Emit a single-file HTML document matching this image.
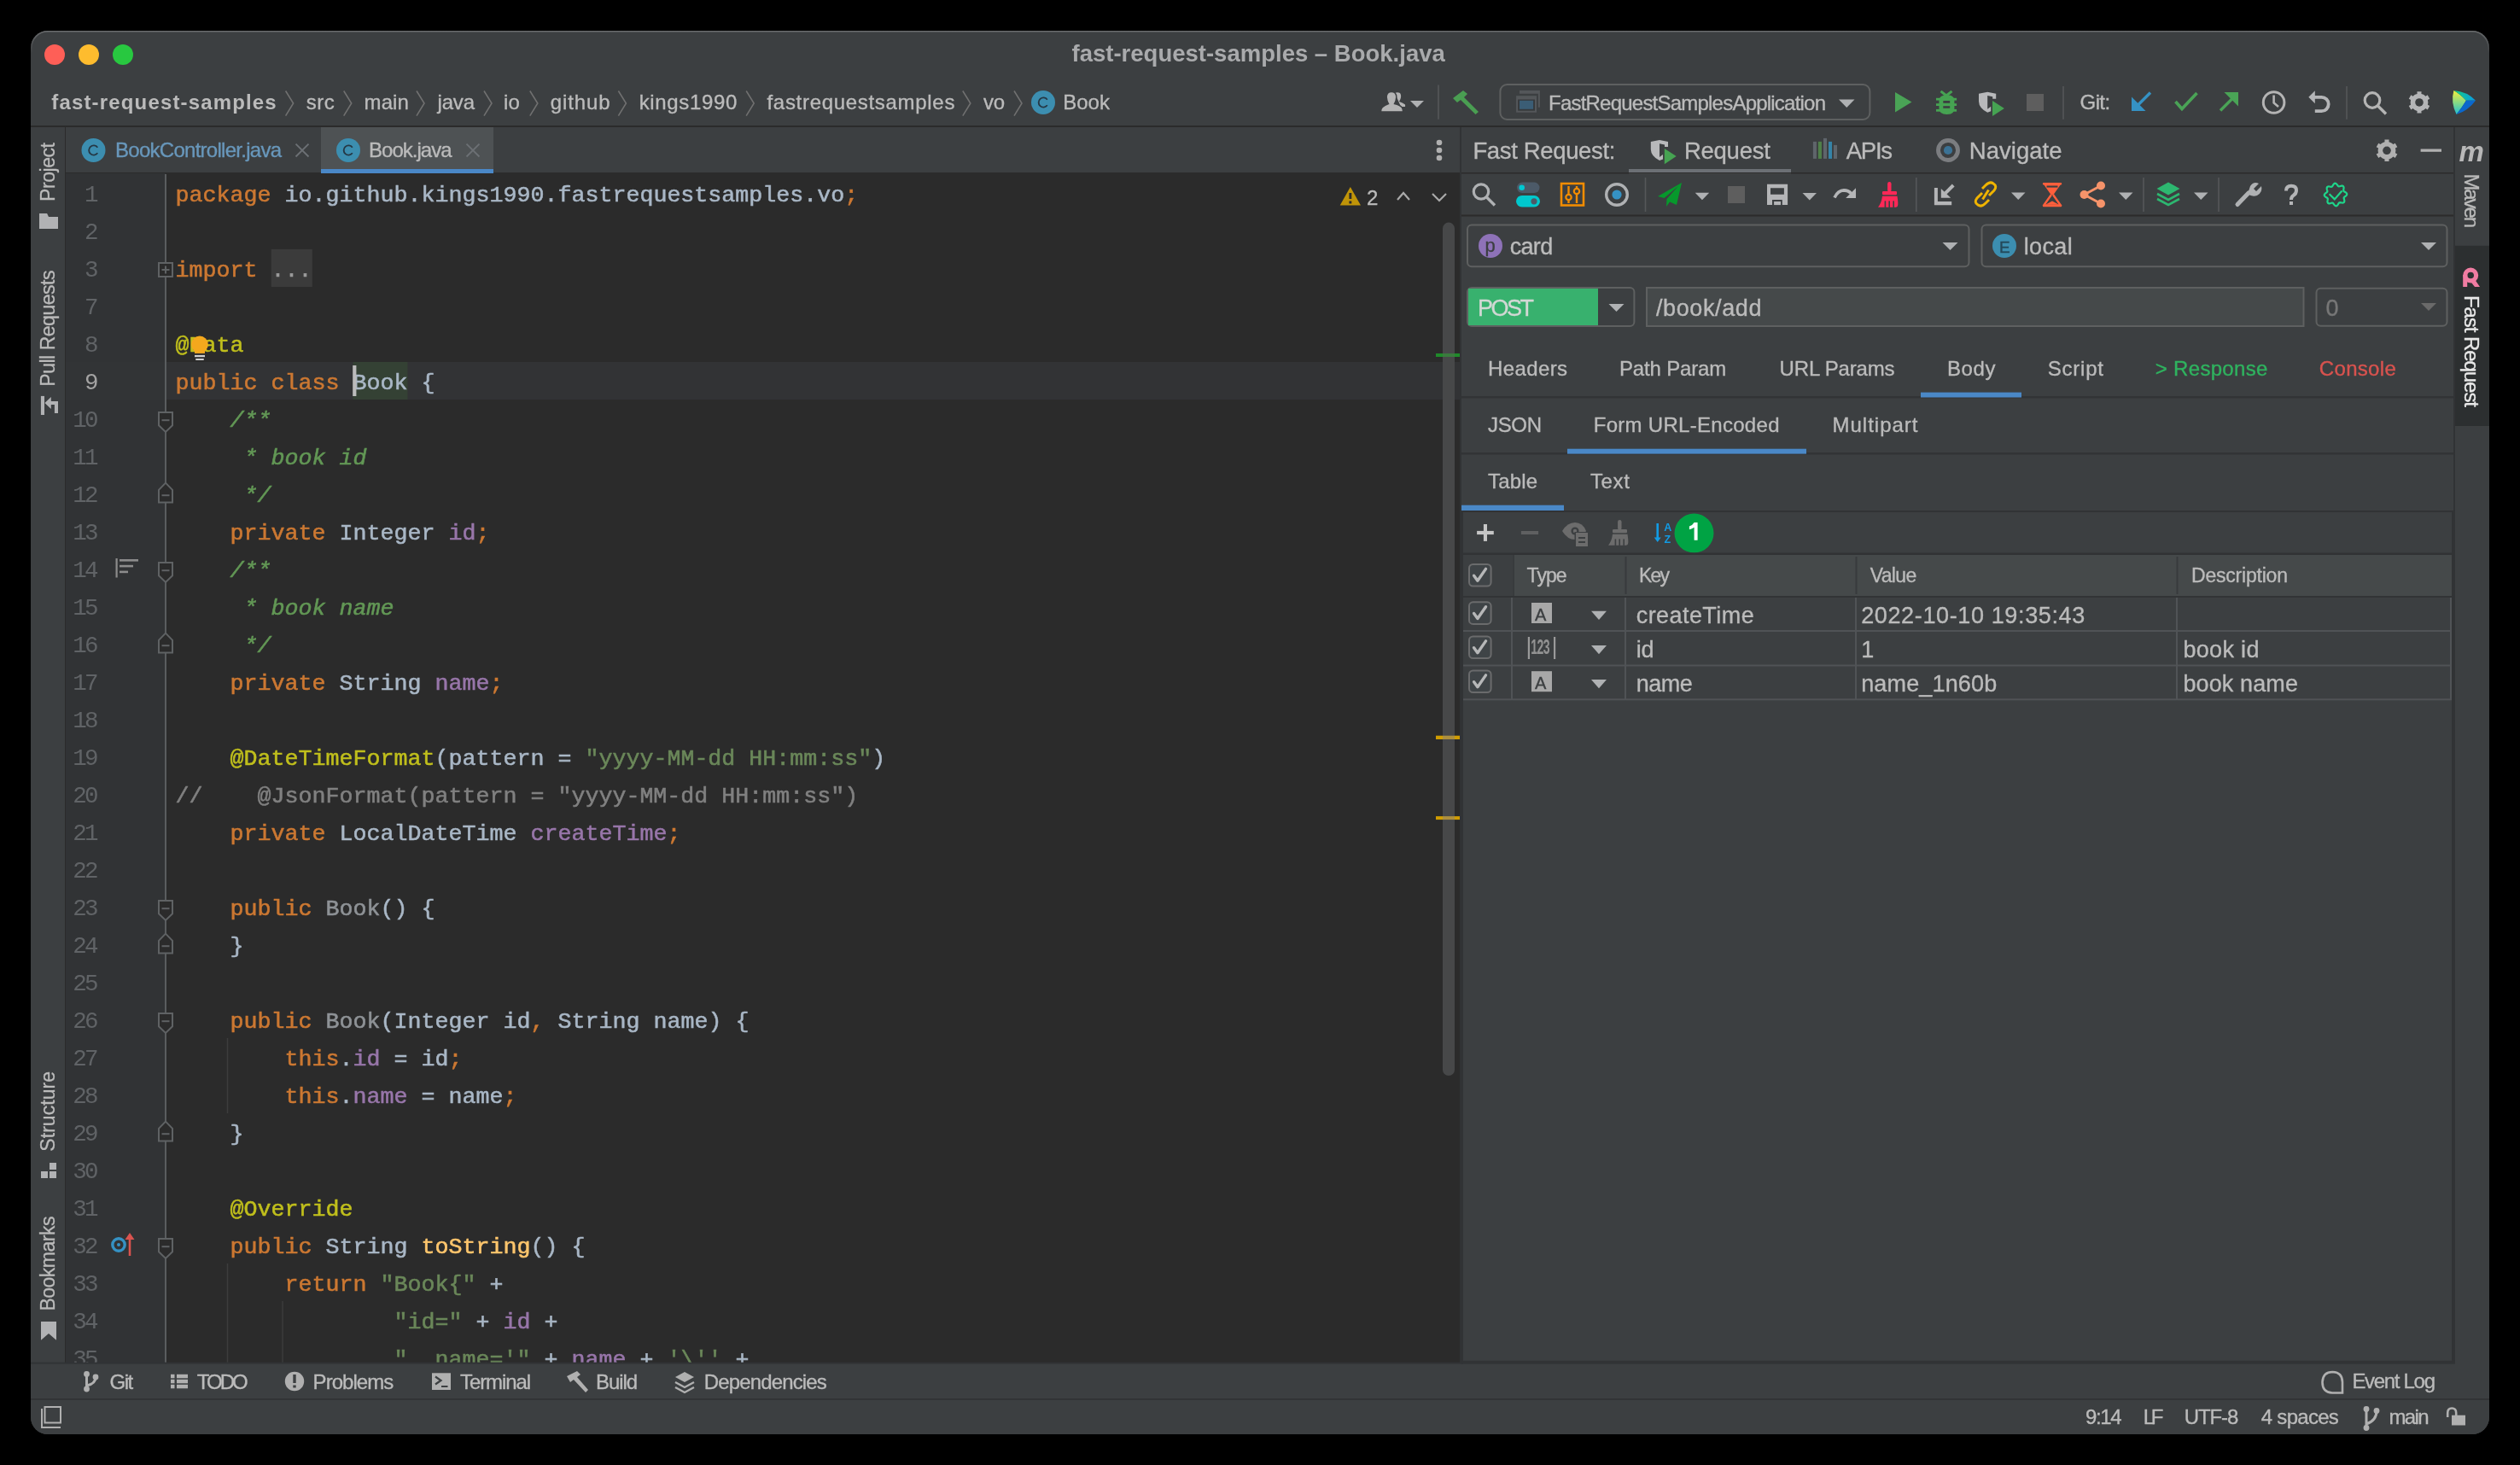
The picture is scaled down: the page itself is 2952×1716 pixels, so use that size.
<!DOCTYPE html><html><head><meta charset="utf-8"><title>fast-request-samples</title><style>html,body{margin:0;padding:0;background:#000;width:2952px;height:1716px;overflow:hidden}svg{display:block}text{font-kerning:normal}#wrap{will-change:transform;width:2952px;height:1716px}</style></head><body><div id="wrap"><svg width="2952" height="1716" viewBox="0 0 2952 1716">
<defs><clipPath id="win"><rect x="36" y="36" width="2880" height="1644" rx="20" ry="20"/></clipPath><clipPath id="ed"><rect x="77" y="203" width="1633" height="1393"/></clipPath></defs>
<rect x="0" y="0" width="2952" height="1716" fill="#000000" />
<g clip-path="url(#win)">
<rect x="36" y="36" width="2880" height="1644" fill="#3c3f41" />
<circle cx="64" cy="64" r="12" fill="#fe5f57"/>
<circle cx="104" cy="64" r="12" fill="#febc2e"/>
<circle cx="144" cy="64" r="12" fill="#28c840"/>
<text x="1255.50" y="72" font-family='"Liberation Sans", sans-serif' font-size="27.5" font-weight="bold" font-style="normal" fill="#a9aaac" letter-spacing="0.005" >fast-request-samples – Book.java</text>
<text x="60.30" y="128" font-family='"Liberation Sans", sans-serif' font-size="24" font-weight="bold" font-style="normal" fill="#bbbbbb" letter-spacing="1.158" >fast-request-samples</text>
<text x="358.70" y="128" font-family='"Liberation Sans", sans-serif' font-size="24" font-weight="normal" font-style="normal" fill="#bbbbbb" stroke="#bbbbbb" stroke-width="0.35" letter-spacing="0.500" >src</text>
<text x="426.50" y="128" font-family='"Liberation Sans", sans-serif' font-size="24" font-weight="normal" font-style="normal" fill="#bbbbbb" stroke="#bbbbbb" stroke-width="0.35" letter-spacing="0.133" >main</text>
<text x="512.50" y="128" font-family='"Liberation Sans", sans-serif' font-size="24" font-weight="normal" font-style="normal" fill="#bbbbbb" stroke="#bbbbbb" stroke-width="0.35" letter-spacing="-0.183" >java</text>
<text x="589.90" y="128" font-family='"Liberation Sans", sans-serif' font-size="24" font-weight="normal" font-style="normal" fill="#bbbbbb" stroke="#bbbbbb" stroke-width="0.35" letter-spacing="0.400" >io</text>
<text x="644.80" y="128" font-family='"Liberation Sans", sans-serif' font-size="24" font-weight="normal" font-style="normal" fill="#bbbbbb" stroke="#bbbbbb" stroke-width="0.35" letter-spacing="0.860" >github</text>
<text x="748.70" y="128" font-family='"Liberation Sans", sans-serif' font-size="24" font-weight="normal" font-style="normal" fill="#bbbbbb" stroke="#bbbbbb" stroke-width="0.35" letter-spacing="0.662" >kings1990</text>
<text x="898.50" y="128" font-family='"Liberation Sans", sans-serif' font-size="24" font-weight="normal" font-style="normal" fill="#bbbbbb" stroke="#bbbbbb" stroke-width="0.35" letter-spacing="0.694" >fastrequestsamples</text>
<text x="1152.00" y="128" font-family='"Liberation Sans", sans-serif' font-size="24" font-weight="normal" font-style="normal" fill="#bbbbbb" stroke="#bbbbbb" stroke-width="0.35" letter-spacing="-0.150" >vo</text>
<polyline points="334.6,106.5 343.6,121 334.6,135.7" fill="none" stroke="#707070" stroke-width="1.6"/>
<polyline points="402.7,106.5 411.7,121 402.7,135.7" fill="none" stroke="#707070" stroke-width="1.6"/>
<polyline points="488,106.5 497,121 488,135.7" fill="none" stroke="#707070" stroke-width="1.6"/>
<polyline points="567,106.5 576,121 567,135.7" fill="none" stroke="#707070" stroke-width="1.6"/>
<polyline points="620.8,106.5 629.8,121 620.8,135.7" fill="none" stroke="#707070" stroke-width="1.6"/>
<polyline points="724.4,106.5 733.4,121 724.4,135.7" fill="none" stroke="#707070" stroke-width="1.6"/>
<polyline points="874.2,106.5 883.2,121 874.2,135.7" fill="none" stroke="#707070" stroke-width="1.6"/>
<polyline points="1127.8,106.5 1136.8,121 1127.8,135.7" fill="none" stroke="#707070" stroke-width="1.6"/>
<polyline points="1188,106.5 1197,121 1188,135.7" fill="none" stroke="#707070" stroke-width="1.6"/>
<circle cx="1222" cy="120" r="14" fill="#3c8eb0"/>
<path d="M1226.8,116.7 A5.6,5.6 0 1 0 1226.8,123.3" fill="none" stroke="#253845" stroke-width="1.9"/>
<text x="1245.20" y="128" font-family='"Liberation Sans", sans-serif' font-size="24" font-weight="normal" font-style="normal" fill="#bbbbbb" stroke="#bbbbbb" stroke-width="0.35" letter-spacing="0.017" >Book</text>
<rect x="36" y="147" width="2880" height="2" fill="#2b2b2b" />
<rect x="36" y="149" width="40" height="1447" fill="#3c3f41" />
<rect x="76" y="149" width="1" height="1447" fill="#2b2b2b" />
<text x="0" y="0" transform="translate(63.91,236.00) rotate(-90)" font-family='"Liberation Sans", sans-serif' font-size="23" fill="#bbbbbb" stroke="#bbbbbb" stroke-width="0.3" letter-spacing="-0.433">Project</text>
<text x="0" y="0" transform="translate(63.91,452.70) rotate(-90)" font-family='"Liberation Sans", sans-serif' font-size="23" fill="#bbbbbb" stroke="#bbbbbb" stroke-width="0.3" letter-spacing="-0.475">Pull Requests</text>
<text x="0" y="0" transform="translate(63.91,1348.70) rotate(-90)" font-family='"Liberation Sans", sans-serif' font-size="23" fill="#bbbbbb" stroke="#bbbbbb" stroke-width="0.3" letter-spacing="0.050">Structure</text>
<text x="0" y="0" transform="translate(63.91,1535.60) rotate(-90)" font-family='"Liberation Sans", sans-serif' font-size="23" fill="#bbbbbb" stroke="#bbbbbb" stroke-width="0.3" letter-spacing="-0.494">Bookmarks</text>
<path d="M46,250 L55.1,250 L57,254 L68,254 L68,268 L46,268 Z" fill="#b1b2b4"/>
<rect x="47.9" y="463.9" width="4.1" height="22.1" fill="#b1b2b4"/>
<path d="M52.4,472 L59.8,465 L59.8,470 L68,470 L68,484 L63.9,484 L63.9,474.1 L59.8,474.1 L59.8,479 Z" fill="#b1b2b4"/>
<rect x="58" y="1362" width="8" height="8" fill="#b1b2b4"/><rect x="48" y="1372" width="8" height="8" fill="#b1b2b4"/><rect x="58" y="1372" width="8" height="8" fill="#b1b2b4"/>
<path d="M48,1548 L66,1548 L66,1569.8 L57,1562 L48,1569.8 Z" fill="#b1b2b4"/>
<rect x="77" y="149" width="1633" height="53" fill="#3c3f41" />
<rect x="376" y="149" width="202" height="53" fill="#4e5254" />
<circle cx="109.5" cy="176" r="14" fill="#3c8eb0"/>
<path d="M114.3,172.7 A5.6,5.6 0 1 0 114.3,179.3" fill="none" stroke="#253845" stroke-width="1.9"/>
<text x="135.00" y="184" font-family='"Liberation Sans", sans-serif' font-size="24" font-weight="normal" font-style="normal" fill="#6897bb" stroke="#6897bb" stroke-width="0.35" letter-spacing="-0.728" >BookController.java</text>
<circle cx="408" cy="176" r="14" fill="#3c8eb0"/>
<path d="M412.8,172.7 A5.6,5.6 0 1 0 412.8,179.3" fill="none" stroke="#253845" stroke-width="1.9"/>
<text x="432.00" y="184" font-family='"Liberation Sans", sans-serif' font-size="24" font-weight="normal" font-style="normal" fill="#bbbbbb" stroke="#bbbbbb" stroke-width="0.35" letter-spacing="-0.988" >Book.java</text>
<path d="M346.5,168.6 L361.5,183.5 M361.5,168.6 L346.5,183.5" stroke="#6c7074" stroke-width="1.9"/>
<path d="M546.5,168.6 L561.5,183.5 M561.5,168.6 L546.5,183.5" stroke="#6c7074" stroke-width="1.9"/>
<circle cx="1686" cy="167" r="3.3" fill="#b0b0b0"/>
<circle cx="1686" cy="176" r="3.3" fill="#b0b0b0"/>
<circle cx="1686" cy="185" r="3.3" fill="#b0b0b0"/>
<rect x="77" y="202" width="1633" height="1" fill="#2b2b2b" />
<rect x="376" y="198" width="202" height="5.699999999999989" fill="#4a88c7" />
<rect x="77" y="203" width="1633" height="1393" fill="#2b2b2b" />
<rect x="77" y="203" width="117" height="1393" fill="#313335" />
<g clip-path="url(#ed)">
<rect x="194" y="424" width="1516" height="44" fill="#323335" />
<rect x="77" y="424" width="117" height="44" fill="#323436" />
<rect x="413.5" y="424" width="64.0" height="44" fill="#344134" />
<rect x="317.7" y="291.8" width="48.10000000000002" height="44.19999999999999" fill="#3b3b3b" />
<line x1="266.5" y1="1216" x2="266.5" y2="1304" stroke="#3d3d3d" stroke-width="1.5" />
<line x1="266.5" y1="1480" x2="266.5" y2="1596" stroke="#3d3d3d" stroke-width="1.5" />
<line x1="331" y1="1524" x2="331" y2="1596" stroke="#3d3d3d" stroke-width="1.5" />
<line x1="194" y1="204" x2="194" y2="1596" stroke="#5a5d5f" stroke-width="2" />
<path d="M186,483 L202,483 L202,498.2 L194,505.9 L186,498.2 Z" fill="#2b2b2b" stroke="#5f6264" stroke-width="2"/>
<rect x="189.5" y="491.2" width="9" height="2" fill="#5f6264"/>
<path d="M186,659 L202,659 L202,674.2 L194,681.9 L186,674.2 Z" fill="#2b2b2b" stroke="#5f6264" stroke-width="2"/>
<rect x="189.5" y="667.2" width="9" height="2" fill="#5f6264"/>
<path d="M186,1055 L202,1055 L202,1070.2 L194,1077.9 L186,1070.2 Z" fill="#2b2b2b" stroke="#5f6264" stroke-width="2"/>
<rect x="189.5" y="1063.2" width="9" height="2" fill="#5f6264"/>
<path d="M186,1187 L202,1187 L202,1202.2 L194,1209.9 L186,1202.2 Z" fill="#2b2b2b" stroke="#5f6264" stroke-width="2"/>
<rect x="189.5" y="1195.2" width="9" height="2" fill="#5f6264"/>
<path d="M186,1451 L202,1451 L202,1466.2 L194,1473.9 L186,1466.2 Z" fill="#2b2b2b" stroke="#5f6264" stroke-width="2"/>
<rect x="189.5" y="1459.2" width="9" height="2" fill="#5f6264"/>
<path d="M186,588.6 L202,588.6 L202,573.8 L194,565.6 L186,573.8 Z" fill="#2b2b2b" stroke="#5f6264" stroke-width="2"/>
<rect x="189.5" y="579.2" width="9" height="2" fill="#5f6264"/>
<path d="M186,764.6 L202,764.6 L202,749.8 L194,741.6 L186,749.8 Z" fill="#2b2b2b" stroke="#5f6264" stroke-width="2"/>
<rect x="189.5" y="755.2" width="9" height="2" fill="#5f6264"/>
<path d="M186,1116.6 L202,1116.6 L202,1101.8 L194,1093.6 L186,1101.8 Z" fill="#2b2b2b" stroke="#5f6264" stroke-width="2"/>
<rect x="189.5" y="1107.2" width="9" height="2" fill="#5f6264"/>
<path d="M186,1336.6 L202,1336.6 L202,1321.8 L194,1313.6 L186,1321.8 Z" fill="#2b2b2b" stroke="#5f6264" stroke-width="2"/>
<rect x="189.5" y="1327.2" width="9" height="2" fill="#5f6264"/>
<rect x="186" y="308" width="16" height="16" fill="#2b2b2b" stroke="#5f6264" stroke-width="2"/>
<rect x="189.5" y="315" width="9" height="2" fill="#5f6264"/><rect x="193" y="311.5" width="2" height="9" fill="#5f6264"/>
<rect x="135.5" y="654" width="2.2" height="22.5" fill="#8c8c8c"/>
<rect x="140" y="655.0" width="22" height="2.6" fill="#8c8c8c"/>
<rect x="140" y="661.8" width="16" height="2.6" fill="#8c8c8c"/>
<rect x="140" y="668.6" width="10" height="2.6" fill="#8c8c8c"/>
<circle cx="139" cy="1458" r="7.2" fill="none" stroke="#3592c4" stroke-width="3.4"/>
<circle cx="139" cy="1458" r="2" fill="#3592c4"/>
<path d="M152,1471 L152,1450" stroke="#d9534f" stroke-width="2.6"/>
<path d="M146.5,1452 L152,1444 L157.5,1452 Z" fill="#d9534f"/>
<text x="113" y="235.5" text-anchor="end" font-family='"Liberation Mono", monospace' font-size="27.5" letter-spacing="-2.6" fill="#606366">1</text>
<text x="205.5" y="235.5" font-family='"Liberation Mono", monospace' font-size="26.662" stroke-width="0.55" xml:space="preserve" style="white-space:pre"><tspan fill="#cc7832" stroke="#cc7832">package</tspan><tspan fill="#a9b7c6" stroke="#a9b7c6"> io.github.kings1990.fastrequestsamples.vo</tspan><tspan fill="#cc7832" stroke="#cc7832">;</tspan></text>
<text x="113" y="279.5" text-anchor="end" font-family='"Liberation Mono", monospace' font-size="27.5" letter-spacing="-2.6" fill="#606366">2</text>
<text x="113" y="323.5" text-anchor="end" font-family='"Liberation Mono", monospace' font-size="27.5" letter-spacing="-2.6" fill="#606366">3</text>
<text x="205.5" y="323.5" font-family='"Liberation Mono", monospace' font-size="26.662" stroke-width="0.55" xml:space="preserve" style="white-space:pre"><tspan fill="#cc7832" stroke="#cc7832">import</tspan><tspan fill="#a9b7c6" stroke="#a9b7c6"> </tspan><tspan fill="#9a9a9a" stroke="#9a9a9a">...</tspan></text>
<text x="113" y="367.5" text-anchor="end" font-family='"Liberation Mono", monospace' font-size="27.5" letter-spacing="-2.6" fill="#606366">7</text>
<text x="113" y="411.5" text-anchor="end" font-family='"Liberation Mono", monospace' font-size="27.5" letter-spacing="-2.6" fill="#606366">8</text>
<text x="205.5" y="411.5" font-family='"Liberation Mono", monospace' font-size="26.662" stroke-width="0.55" xml:space="preserve" style="white-space:pre"><tspan fill="#c0bf1c" stroke="#c0bf1c">@Data</tspan></text>
<text x="113" y="455.5" text-anchor="end" font-family='"Liberation Mono", monospace' font-size="27.5" letter-spacing="-2.6" fill="#a4a3a3">9</text>
<text x="205.5" y="455.5" font-family='"Liberation Mono", monospace' font-size="26.662" stroke-width="0.55" xml:space="preserve" style="white-space:pre"><tspan fill="#cc7832" stroke="#cc7832">public class </tspan><tspan fill="#a9b7c6" stroke="#a9b7c6">Book {</tspan></text>
<text x="113" y="499.5" text-anchor="end" font-family='"Liberation Mono", monospace' font-size="27.5" letter-spacing="-2.6" fill="#606366">10</text>
<text x="205.5" y="499.5" font-family='"Liberation Mono", monospace' font-size="26.662" stroke-width="0.55" xml:space="preserve" style="white-space:pre"><tspan fill="#629755" stroke="#629755" font-style="italic">    /**</tspan></text>
<text x="113" y="543.5" text-anchor="end" font-family='"Liberation Mono", monospace' font-size="27.5" letter-spacing="-2.6" fill="#606366">11</text>
<text x="205.5" y="543.5" font-family='"Liberation Mono", monospace' font-size="26.662" stroke-width="0.55" xml:space="preserve" style="white-space:pre"><tspan fill="#629755" stroke="#629755" font-style="italic">     * book id</tspan></text>
<text x="113" y="587.5" text-anchor="end" font-family='"Liberation Mono", monospace' font-size="27.5" letter-spacing="-2.6" fill="#606366">12</text>
<text x="205.5" y="587.5" font-family='"Liberation Mono", monospace' font-size="26.662" stroke-width="0.55" xml:space="preserve" style="white-space:pre"><tspan fill="#629755" stroke="#629755" font-style="italic">     */</tspan></text>
<text x="113" y="631.5" text-anchor="end" font-family='"Liberation Mono", monospace' font-size="27.5" letter-spacing="-2.6" fill="#606366">13</text>
<text x="205.5" y="631.5" font-family='"Liberation Mono", monospace' font-size="26.662" stroke-width="0.55" xml:space="preserve" style="white-space:pre"><tspan fill="#cc7832" stroke="#cc7832">    private </tspan><tspan fill="#a9b7c6" stroke="#a9b7c6">Integer </tspan><tspan fill="#9876aa" stroke="#9876aa">id</tspan><tspan fill="#cc7832" stroke="#cc7832">;</tspan></text>
<text x="113" y="675.5" text-anchor="end" font-family='"Liberation Mono", monospace' font-size="27.5" letter-spacing="-2.6" fill="#606366">14</text>
<text x="205.5" y="675.5" font-family='"Liberation Mono", monospace' font-size="26.662" stroke-width="0.55" xml:space="preserve" style="white-space:pre"><tspan fill="#629755" stroke="#629755" font-style="italic">    /**</tspan></text>
<text x="113" y="719.5" text-anchor="end" font-family='"Liberation Mono", monospace' font-size="27.5" letter-spacing="-2.6" fill="#606366">15</text>
<text x="205.5" y="719.5" font-family='"Liberation Mono", monospace' font-size="26.662" stroke-width="0.55" xml:space="preserve" style="white-space:pre"><tspan fill="#629755" stroke="#629755" font-style="italic">     * book name</tspan></text>
<text x="113" y="763.5" text-anchor="end" font-family='"Liberation Mono", monospace' font-size="27.5" letter-spacing="-2.6" fill="#606366">16</text>
<text x="205.5" y="763.5" font-family='"Liberation Mono", monospace' font-size="26.662" stroke-width="0.55" xml:space="preserve" style="white-space:pre"><tspan fill="#629755" stroke="#629755" font-style="italic">     */</tspan></text>
<text x="113" y="807.5" text-anchor="end" font-family='"Liberation Mono", monospace' font-size="27.5" letter-spacing="-2.6" fill="#606366">17</text>
<text x="205.5" y="807.5" font-family='"Liberation Mono", monospace' font-size="26.662" stroke-width="0.55" xml:space="preserve" style="white-space:pre"><tspan fill="#cc7832" stroke="#cc7832">    private </tspan><tspan fill="#a9b7c6" stroke="#a9b7c6">String </tspan><tspan fill="#9876aa" stroke="#9876aa">name</tspan><tspan fill="#cc7832" stroke="#cc7832">;</tspan></text>
<text x="113" y="851.5" text-anchor="end" font-family='"Liberation Mono", monospace' font-size="27.5" letter-spacing="-2.6" fill="#606366">18</text>
<text x="113" y="895.5" text-anchor="end" font-family='"Liberation Mono", monospace' font-size="27.5" letter-spacing="-2.6" fill="#606366">19</text>
<text x="205.5" y="895.5" font-family='"Liberation Mono", monospace' font-size="26.662" stroke-width="0.55" xml:space="preserve" style="white-space:pre"><tspan fill="#c0bf1c" stroke="#c0bf1c">    @DateTimeFormat</tspan><tspan fill="#a9b7c6" stroke="#a9b7c6">(pattern = </tspan><tspan fill="#6a8759" stroke="#6a8759">&quot;yyyy-MM-dd HH:mm:ss&quot;</tspan><tspan fill="#a9b7c6" stroke="#a9b7c6">)</tspan></text>
<text x="113" y="939.5" text-anchor="end" font-family='"Liberation Mono", monospace' font-size="27.5" letter-spacing="-2.6" fill="#606366">20</text>
<text x="205.5" y="939.5" font-family='"Liberation Mono", monospace' font-size="26.662" stroke-width="0.55" xml:space="preserve" style="white-space:pre"><tspan fill="#808080" stroke="#808080">//    @JsonFormat(pattern = &quot;yyyy-MM-dd HH:mm:ss&quot;)</tspan></text>
<text x="113" y="983.5" text-anchor="end" font-family='"Liberation Mono", monospace' font-size="27.5" letter-spacing="-2.6" fill="#606366">21</text>
<text x="205.5" y="983.5" font-family='"Liberation Mono", monospace' font-size="26.662" stroke-width="0.55" xml:space="preserve" style="white-space:pre"><tspan fill="#cc7832" stroke="#cc7832">    private </tspan><tspan fill="#a9b7c6" stroke="#a9b7c6">LocalDateTime </tspan><tspan fill="#9876aa" stroke="#9876aa">createTime</tspan><tspan fill="#cc7832" stroke="#cc7832">;</tspan></text>
<text x="113" y="1027.5" text-anchor="end" font-family='"Liberation Mono", monospace' font-size="27.5" letter-spacing="-2.6" fill="#606366">22</text>
<text x="113" y="1071.5" text-anchor="end" font-family='"Liberation Mono", monospace' font-size="27.5" letter-spacing="-2.6" fill="#606366">23</text>
<text x="205.5" y="1071.5" font-family='"Liberation Mono", monospace' font-size="26.662" stroke-width="0.55" xml:space="preserve" style="white-space:pre"><tspan fill="#cc7832" stroke="#cc7832">    public </tspan><tspan fill="#8e9296" stroke="#8e9296">Book</tspan><tspan fill="#a9b7c6" stroke="#a9b7c6">() {</tspan></text>
<text x="113" y="1115.5" text-anchor="end" font-family='"Liberation Mono", monospace' font-size="27.5" letter-spacing="-2.6" fill="#606366">24</text>
<text x="205.5" y="1115.5" font-family='"Liberation Mono", monospace' font-size="26.662" stroke-width="0.55" xml:space="preserve" style="white-space:pre"><tspan fill="#a9b7c6" stroke="#a9b7c6">    }</tspan></text>
<text x="113" y="1159.5" text-anchor="end" font-family='"Liberation Mono", monospace' font-size="27.5" letter-spacing="-2.6" fill="#606366">25</text>
<text x="113" y="1203.5" text-anchor="end" font-family='"Liberation Mono", monospace' font-size="27.5" letter-spacing="-2.6" fill="#606366">26</text>
<text x="205.5" y="1203.5" font-family='"Liberation Mono", monospace' font-size="26.662" stroke-width="0.55" xml:space="preserve" style="white-space:pre"><tspan fill="#cc7832" stroke="#cc7832">    public </tspan><tspan fill="#8e9296" stroke="#8e9296">Book</tspan><tspan fill="#a9b7c6" stroke="#a9b7c6">(Integer id</tspan><tspan fill="#cc7832" stroke="#cc7832">,</tspan><tspan fill="#a9b7c6" stroke="#a9b7c6"> String name) {</tspan></text>
<text x="113" y="1247.5" text-anchor="end" font-family='"Liberation Mono", monospace' font-size="27.5" letter-spacing="-2.6" fill="#606366">27</text>
<text x="205.5" y="1247.5" font-family='"Liberation Mono", monospace' font-size="26.662" stroke-width="0.55" xml:space="preserve" style="white-space:pre"><tspan fill="#cc7832" stroke="#cc7832">        this</tspan><tspan fill="#a9b7c6" stroke="#a9b7c6">.</tspan><tspan fill="#9876aa" stroke="#9876aa">id</tspan><tspan fill="#a9b7c6" stroke="#a9b7c6"> = id</tspan><tspan fill="#cc7832" stroke="#cc7832">;</tspan></text>
<text x="113" y="1291.5" text-anchor="end" font-family='"Liberation Mono", monospace' font-size="27.5" letter-spacing="-2.6" fill="#606366">28</text>
<text x="205.5" y="1291.5" font-family='"Liberation Mono", monospace' font-size="26.662" stroke-width="0.55" xml:space="preserve" style="white-space:pre"><tspan fill="#cc7832" stroke="#cc7832">        this</tspan><tspan fill="#a9b7c6" stroke="#a9b7c6">.</tspan><tspan fill="#9876aa" stroke="#9876aa">name</tspan><tspan fill="#a9b7c6" stroke="#a9b7c6"> = name</tspan><tspan fill="#cc7832" stroke="#cc7832">;</tspan></text>
<text x="113" y="1335.5" text-anchor="end" font-family='"Liberation Mono", monospace' font-size="27.5" letter-spacing="-2.6" fill="#606366">29</text>
<text x="205.5" y="1335.5" font-family='"Liberation Mono", monospace' font-size="26.662" stroke-width="0.55" xml:space="preserve" style="white-space:pre"><tspan fill="#a9b7c6" stroke="#a9b7c6">    }</tspan></text>
<text x="113" y="1379.5" text-anchor="end" font-family='"Liberation Mono", monospace' font-size="27.5" letter-spacing="-2.6" fill="#606366">30</text>
<text x="113" y="1423.5" text-anchor="end" font-family='"Liberation Mono", monospace' font-size="27.5" letter-spacing="-2.6" fill="#606366">31</text>
<text x="205.5" y="1423.5" font-family='"Liberation Mono", monospace' font-size="26.662" stroke-width="0.55" xml:space="preserve" style="white-space:pre"><tspan fill="#c0bf1c" stroke="#c0bf1c">    @Override</tspan></text>
<text x="113" y="1467.5" text-anchor="end" font-family='"Liberation Mono", monospace' font-size="27.5" letter-spacing="-2.6" fill="#606366">32</text>
<text x="205.5" y="1467.5" font-family='"Liberation Mono", monospace' font-size="26.662" stroke-width="0.55" xml:space="preserve" style="white-space:pre"><tspan fill="#cc7832" stroke="#cc7832">    public </tspan><tspan fill="#a9b7c6" stroke="#a9b7c6">String </tspan><tspan fill="#ffc66d" stroke="#ffc66d">toString</tspan><tspan fill="#a9b7c6" stroke="#a9b7c6">() {</tspan></text>
<text x="113" y="1511.5" text-anchor="end" font-family='"Liberation Mono", monospace' font-size="27.5" letter-spacing="-2.6" fill="#606366">33</text>
<text x="205.5" y="1511.5" font-family='"Liberation Mono", monospace' font-size="26.662" stroke-width="0.55" xml:space="preserve" style="white-space:pre"><tspan fill="#cc7832" stroke="#cc7832">        return </tspan><tspan fill="#6a8759" stroke="#6a8759">&quot;Book{&quot;</tspan><tspan fill="#a9b7c6" stroke="#a9b7c6"> +</tspan></text>
<text x="113" y="1555.5" text-anchor="end" font-family='"Liberation Mono", monospace' font-size="27.5" letter-spacing="-2.6" fill="#606366">34</text>
<text x="205.5" y="1555.5" font-family='"Liberation Mono", monospace' font-size="26.662" stroke-width="0.55" xml:space="preserve" style="white-space:pre"><tspan fill="#6a8759" stroke="#6a8759">                &quot;id=&quot;</tspan><tspan fill="#a9b7c6" stroke="#a9b7c6"> + </tspan><tspan fill="#9876aa" stroke="#9876aa">id</tspan><tspan fill="#a9b7c6" stroke="#a9b7c6"> +</tspan></text>
<text x="113" y="1599.5" text-anchor="end" font-family='"Liberation Mono", monospace' font-size="27.5" letter-spacing="-2.6" fill="#606366">35</text>
<text x="205.5" y="1599.5" font-family='"Liberation Mono", monospace' font-size="26.662" stroke-width="0.55" xml:space="preserve" style="white-space:pre"><tspan fill="#6a8759" stroke="#6a8759">                &quot;, name=&#x27;&quot;</tspan><tspan fill="#a9b7c6" stroke="#a9b7c6"> + </tspan><tspan fill="#9876aa" stroke="#9876aa">name</tspan><tspan fill="#a9b7c6" stroke="#a9b7c6"> + </tspan><tspan fill="#6a8759" stroke="#6a8759">&#x27;\&#x27;&#x27;</tspan><tspan fill="#a9b7c6" stroke="#a9b7c6"> +</tspan></text>
<rect x="413.2" y="428" width="4.199999999999989" height="36" fill="#bbbbbb" />
<circle cx="233.9" cy="403.4" r="9.9" fill="#f4a81d"/>
<rect x="228" y="405" width="12" height="8.9" fill="#f4a81d"/>
<rect x="228" y="415.9" width="12" height="2.3" fill="#cfcfcf"/><rect x="229" y="420" width="10" height="2" rx="1" fill="#cfcfcf"/>
</g>
<path d="M1569.7,240.5 L1581.85,219 L1594,240.5 Z" fill="#c09408"/>
<rect x="1580.4" y="226" width="2.8999999999998636" height="7" fill="#2b2b2b" />
<rect x="1580.4" y="235.5" width="2.8999999999998636" height="3.0" fill="#2b2b2b" />
<text x="1601.00" y="240" font-family='"Liberation Sans", sans-serif' font-size="24" font-weight="normal" font-style="normal" fill="#bbbbbb" stroke="#bbbbbb" stroke-width="0.35" letter-spacing="0.000" >2</text>
<polyline points="1637,234 1644,226 1651,234" fill="none" stroke="#aaaaaa" stroke-width="2.2"/>
<polyline points="1678,227 1686,235 1694,227" fill="none" stroke="#aaaaaa" stroke-width="2.2"/>
<rect x="1690" y="260.6" width="14" height="999.4" fill="#474849" rx="7"/>
<rect x="1682" y="414" width="8" height="4" fill="#1f8a2a" />
<rect x="1704" y="414" width="6" height="4" fill="#1f8a2a" />
<rect x="1690" y="414" width="14" height="4" fill="#3a7a3e" />
<rect x="1682" y="861.7" width="8" height="4.2999999999999545" fill="#cf9c00" />
<rect x="1704" y="861.7" width="6" height="4.2999999999999545" fill="#cf9c00" />
<rect x="1690" y="861.7" width="14" height="4.2999999999999545" fill="#ad8f3e" />
<rect x="1682" y="956.1" width="8" height="4.0" fill="#cf9c00" />
<rect x="1704" y="956.1" width="6" height="4.0" fill="#cf9c00" />
<rect x="1690" y="956.1" width="14" height="4.0" fill="#ad8f3e" />
<rect x="1710" y="149" width="2" height="449" fill="#313335" />
<rect x="1710" y="598" width="4" height="999.5999999999999" fill="#313335" />
<rect x="1712" y="149" width="1162" height="1447" fill="#3c3f41" />
<text x="1725.40" y="186" font-family='"Liberation Sans", sans-serif' font-size="27.5" font-weight="normal" font-style="normal" fill="#bbbbbb" stroke="#bbbbbb" stroke-width="0.35" letter-spacing="-0.350" >Fast Request:</text>
<path transform="translate(1933.8,163.9)" d="M0,2.1 L10.2,0 L20.2,2.1 L20.2,8.1 L16.2,8.1 L16.2,5.6 L10.2,4.3 L10.2,20 L14.2,17.1 L14.2,22.6 L10.2,24.1 Q0.2,19.1 0,11.1 Z" fill="#b8b9bb"/>
<path transform="translate(1933.8,163.9)" d="M16,10.2 L29.9,19.2 L16,28.4 Z" fill="#46a352"/>
<text x="1973.00" y="186" font-family='"Liberation Sans", sans-serif' font-size="27.5" font-weight="normal" font-style="normal" fill="#bbbbbb" stroke="#bbbbbb" stroke-width="0.35" letter-spacing="-0.275" >Request</text>
<rect x="1908" y="198" width="190" height="5.599999999999994" fill="#6c7075" />
<rect x="2123.9" y="165.9" width="4.050000000000182" height="20.0" fill="#5f656b" />
<rect x="2129.9" y="165.9" width="4.050000000000182" height="20.0" fill="#4f8049" />
<rect x="2136" y="161.9" width="4.050000000000182" height="24.0" fill="#5f656b" />
<rect x="2142" y="165.9" width="4.050000000000182" height="20.0" fill="#3584a8" />
<rect x="2148" y="169.9" width="4.050000000000182" height="16.0" fill="#5f656b" />
<text x="2162.80" y="186" font-family='"Liberation Sans", sans-serif' font-size="27.5" font-weight="normal" font-style="normal" fill="#bbbbbb" stroke="#bbbbbb" stroke-width="0.35" letter-spacing="-1.300" >APIs</text>
<circle cx="2282" cy="176" r="11.5" fill="none" stroke="#7b7d80" stroke-width="4.9"/>
<circle cx="2282" cy="176" r="5.1" fill="#3b7295"/>
<text x="2306.80" y="186" font-family='"Liberation Sans", sans-serif' font-size="27.5" font-weight="normal" font-style="normal" fill="#bbbbbb" stroke="#bbbbbb" stroke-width="0.35" letter-spacing="0.021" >Navigate</text>
<polygon points="2791.01,167.17 2793.53,166.20 2793.42,163.56 2798.58,163.56 2798.47,166.20 2800.99,167.17 2801.41,167.42 2803.51,169.11 2805.74,167.69 2808.33,172.17 2805.98,173.39 2806.40,176.05 2806.40,176.55 2805.98,179.21 2808.33,180.43 2805.74,184.91 2803.51,183.49 2801.41,185.18 2800.99,185.43 2798.47,186.40 2798.58,189.04 2793.42,189.04 2793.53,186.40 2791.01,185.43 2790.59,185.18 2788.49,183.49 2786.26,184.91 2783.67,180.43 2786.02,179.21 2785.60,176.55 2785.60,176.05 2786.02,173.39 2783.67,172.17 2786.26,167.69 2788.49,169.11 2790.59,167.42" fill="#b0b0b0"/>
<circle cx="2796" cy="176.3" r="4.81" fill="#3c3f41"/>
<rect x="2835.6" y="174.5" width="24.40000000000009" height="3.3000000000000114" fill="#b0b0b0" />
<rect x="1712" y="202" width="1162" height="1.5" fill="#2b2b2b" />
<circle cx="1735" cy="224.5" r="8.7" fill="none" stroke="#afb1b3" stroke-width="3.2"/>
<line x1="1741.5" y1="231" x2="1751" y2="240.5" stroke="#afb1b3" stroke-width="3.4"/>
<rect x="1777" y="213.6" width="26.5" height="12.400000000000006" fill="#4c5a68" rx="6.2"/>
<circle cx="1782.7" cy="219.8" r="3.3" fill="#00c8d2"/>
<rect x="1776" y="229" width="28" height="13.599999999999994" fill="#00c8cd" rx="6.8"/>
<circle cx="1797" cy="235.8" r="3.6" fill="#4c5a68"/>
<rect x="1829" y="215" width="26" height="25.5" fill="none" stroke="#f28c00" stroke-width="2.6"/>
<line x1="1837.5" y1="218" x2="1837.5" y2="238" stroke="#f28c00" stroke-width="2.4" />
<line x1="1847" y1="218" x2="1847" y2="238" stroke="#f28c00" stroke-width="2.4" />
<circle cx="1837.5" cy="231" r="3.2" fill="#3c3f41" stroke="#f28c00" stroke-width="2.2"/>
<circle cx="1847" cy="224" r="3.2" fill="#3c3f41" stroke="#f28c00" stroke-width="2.2"/>
<circle cx="1894" cy="228" r="12.3" fill="none" stroke="#afb1b3" stroke-width="3.4"/>
<circle cx="1894" cy="228" r="5.6" fill="#3592c4"/>
<line x1="1927.5" y1="208" x2="1927.5" y2="248" stroke="#555759" stroke-width="1.6" />
<path d="M1942,230 L1970,214 L1964,240 L1956,236.5 L1952,242 L1952.5,233 L1966,218 L1949.5,232 Z" fill="#07982c"/>
<path d="M1985.7,225.8 L2002.2,225.8 L1993.95,234.3 Z" fill="#afb1b3"/>
<rect x="2024" y="218" width="20" height="20" fill="#5e5e5e" />
<path d="M2070,215.8 L2094.1,215.8 L2094.1,240.1 L2087.8,240.1 L2087.8,234.1 L2076,234.1 L2076,240.1 L2070,240.1 Z M2074,220.2 L2074,227.8 L2089.9,227.8 L2089.9,220.2 Z" fill="#b4b5b7" fill-rule="evenodd"/>
<rect x="2078.1" y="236" width="7.900000000000091" height="4.099999999999994" fill="#b4b5b7" />
<path d="M2111.5,226 L2128.0,226 L2119.75,234.5 Z" fill="#afb1b3"/>
<path d="M2149,231.5 Q2153,223 2160,222.9 Q2165,223 2168.5,226.5" fill="none" stroke="#b4b5b7" stroke-width="3.6"/>
<path d="M2174,220.2 L2174,232 L2162.2,232 Z" fill="#b4b5b7"/>
<rect x="2211.1" y="213" width="4.4" height="12" rx="2.2" fill="#fe2857"/>
<rect x="2205" y="223.9" width="17" height="4.3" rx="1.2" fill="#fe2857"/>
<path d="M2205,229.8 L2222.5,229.8 Q2223.6,237 2223.3,240 Q2223,242.8 2221,242.8 L2200,242.8 Q2204,238 2205,229.8 Z" fill="#fe2857"/>
<rect x="2207.6" y="235.4" width="1.6" height="7.5" fill="#3c3f41"/>
<rect x="2212.3999999999996" y="235.4" width="1.6" height="7.5" fill="#3c3f41"/>
<rect x="2217.3999999999996" y="235.4" width="1.6" height="7.5" fill="#3c3f41"/>
<line x1="2244.8" y1="208" x2="2244.8" y2="248" stroke="#555759" stroke-width="1.6" />
<path d="M2265.9,219.9 L2269.9,219.9 L2269.9,236 L2286.2,236 L2286.2,240.2 L2265.9,240.2 Z" fill="#b4b5b7"/>
<path d="M2278.8,226.3 L2288.2,217" stroke="#b4b5b7" stroke-width="4"/>
<path d="M2273.8,220.9 L2273.8,231.8 L2285.2,231.8 Z" fill="#b4b5b7"/>
<path d="M2322,226 L2316,232 Q2312,237 2317,240 Q2321,243 2326,238 L2330,234" fill="none" stroke="#f0b400" stroke-width="3"/>
<path d="M2330,229 L2336,223 Q2340,218 2335,215 Q2331,212 2326,217 L2322,221" fill="none" stroke="#f0b400" stroke-width="3"/>
<line x1="2322.5" y1="233.5" x2="2329.5" y2="222.5" stroke="#f0b400" stroke-width="3" />
<path d="M2356,225.5 L2372.5,225.5 L2364.25,234.0 Z" fill="#afb1b3"/>
<rect x="2392.9" y="213.9" width="22.299999999999727" height="2.6999999999999886" fill="#ff5f3c" rx="1"/>
<rect x="2392.9" y="239.3" width="22.299999999999727" height="2.8999999999999773" fill="#ff5f3c" rx="1"/>
<path d="M2394,216 L2414,216 L2405.5,228 L2402.5,228 Z" fill="#ff5f3c"/>
<rect x="2397.5" y="217.5" width="13.0" height="2.0999999999999943" fill="#3c3f41" />
<path d="M2403,228 L2394.5,240 M2405,228 L2413.5,240" stroke="#ff5f3c" stroke-width="2.4"/>
<path d="M2396.5,239.5 L2404,235.5 L2411.5,239.5 Z" fill="#ff5f3c"/>
<circle cx="2441.5" cy="228" r="5" fill="#f6936a"/><circle cx="2461" cy="217.5" r="5" fill="#f6936a"/><circle cx="2461" cy="238.5" r="5" fill="#f6936a"/>
<path d="M2441.5,228 L2461,217.5 M2441.5,228 L2461,238.5" stroke="#f6936a" stroke-width="3"/>
<path d="M2482,225.5 L2498.5,225.5 L2490.25,234.0 Z" fill="#afb1b3"/>
<line x1="2511" y1="208" x2="2511" y2="248" stroke="#555759" stroke-width="1.6" />
<path d="M2540,213.5 L2553.5,221 L2540,228.5 L2526.5,221 Z" fill="#2db770"/>
<path d="M2527,227 L2540,234 L2553,227 M2527,233 L2540,240 L2553,233" fill="none" stroke="#2db770" stroke-width="2.6"/>
<path d="M2570,225.5 L2586.5,225.5 L2578.25,234.0 Z" fill="#afb1b3"/>
<line x1="2599" y1="208" x2="2599" y2="248" stroke="#555759" stroke-width="1.6" />
<path d="M2621,239.5 L2634,226" stroke="#afb1b3" stroke-width="5" stroke-linecap="round"/>
<path d="M2636,218 Q2640,212 2646,215 L2640,221 L2643,224 L2649,218 Q2651,225 2644,229 Q2638,231 2633,227 Z" fill="#afb1b3"/>
<path d="M2678,223.5 Q2678,217.8 2684,217.8 Q2690,217.8 2690,223 Q2690,227 2686.5,229 Q2684,230.5 2684,234" fill="none" stroke="#b4b5b7" stroke-width="4"/>
<rect x="2682" y="236" width="4" height="4" fill="#b4b5b7" />
<polygon points="2749.19,228.00 2748.69,228.83 2747.89,229.57 2747.01,230.19 2746.25,230.75 2745.77,231.31 2745.62,231.99 2745.76,232.82 2746.05,233.80 2746.29,234.87 2746.31,235.91 2745.99,236.76 2745.32,237.32 2744.38,237.56 2743.30,237.52 2742.24,237.33 2741.30,237.19 2740.56,237.25 2739.99,237.62 2739.50,238.31 2739.00,239.21 2738.41,240.14 2737.70,240.88 2736.87,241.26 2736.00,241.19 2735.17,240.69 2734.43,239.89 2733.81,239.01 2733.25,238.25 2732.69,237.77 2732.01,237.62 2731.18,237.76 2730.20,238.05 2729.13,238.29 2728.09,238.31 2727.24,237.99 2726.68,237.32 2726.44,236.38 2726.48,235.30 2726.67,234.24 2726.81,233.30 2726.75,232.56 2726.38,231.99 2725.69,231.50 2724.79,231.00 2723.86,230.41 2723.12,229.70 2722.74,228.87 2722.81,228.00 2723.31,227.17 2724.11,226.43 2724.99,225.81 2725.75,225.25 2726.23,224.69 2726.38,224.01 2726.24,223.18 2725.95,222.20 2725.71,221.13 2725.69,220.09 2726.01,219.24 2726.68,218.68 2727.62,218.44 2728.70,218.48 2729.76,218.67 2730.70,218.81 2731.44,218.75 2732.01,218.38 2732.50,217.69 2733.00,216.79 2733.59,215.86 2734.30,215.12 2735.13,214.74 2736.00,214.81 2736.83,215.31 2737.57,216.11 2738.19,216.99 2738.75,217.75 2739.31,218.23 2739.99,218.38 2740.82,218.24 2741.80,217.95 2742.87,217.71 2743.91,217.69 2744.76,218.01 2745.32,218.68 2745.56,219.62 2745.52,220.70 2745.33,221.76 2745.19,222.70 2745.25,223.44 2745.62,224.01 2746.31,224.50 2747.21,225.00 2748.14,225.59 2748.88,226.30 2749.26,227.13" fill="none" stroke="#1ed68a" stroke-width="2.2"/>
<polyline points="2728.6,227.2 2734.8,233.4 2743.5,223.6" fill="none" stroke="#1ed68a" stroke-width="2.2"/>
<rect x="1712" y="251.5" width="1162" height="2.0" fill="#2b2b2b" />
<rect x="1719" y="263.5" width="587.5" height="48.69999999999999" rx="5" ry="5" fill="#3c3f41" stroke="#5e6060" stroke-width="2"/>
<circle cx="1746" cy="288" r="14" fill="#8e72b8"/>
<text x="1739.50" y="295" font-family='"Liberation Sans", sans-serif' font-size="22" font-weight="normal" font-style="normal" fill="#3c3f41" stroke="#3c3f41" stroke-width="0.35" letter-spacing="0.000" >p</text>
<text x="1768.70" y="298" font-family='"Liberation Sans", sans-serif' font-size="27" font-weight="normal" font-style="normal" fill="#bbbbbb" stroke="#bbbbbb" stroke-width="0.35" letter-spacing="-0.667" >card</text>
<path d="M2275.5,284 L2293.5,284 L2284.5,293 Z" fill="#afb1b3"/>
<rect x="2321.5" y="263.5" width="545.0" height="48.69999999999999" rx="5" ry="5" fill="#3c3f41" stroke="#5e6060" stroke-width="2"/>
<circle cx="2348" cy="288" r="14" fill="#3c8eb0"/>
<text x="2342.00" y="296" font-family='"Liberation Sans", sans-serif' font-size="19" font-weight="normal" font-style="normal" fill="#24485a" stroke="#24485a" stroke-width="0.35" letter-spacing="0.000" >E</text>
<text x="2370.70" y="298" font-family='"Liberation Sans", sans-serif' font-size="27" font-weight="normal" font-style="normal" fill="#bbbbbb" stroke="#bbbbbb" stroke-width="0.35" letter-spacing="0.363" >local</text>
<path d="M2836,284 L2854,284 L2845.0,293 Z" fill="#afb1b3"/>
<rect x="1719" y="337" width="195.4000000000001" height="45" rx="5" ry="5" fill="#3c3f41" stroke="#5e6060" stroke-width="2"/>
<rect x="1720" y="338" width="152" height="43" fill="#38b16e" />
<text x="1731.00" y="370" font-family='"Liberation Sans", sans-serif' font-size="27" font-weight="normal" font-style="normal" fill="#d2d8d4" stroke="#d2d8d4" stroke-width="0.35" letter-spacing="-2.500" >POST</text>
<path d="M1884.5,356 L1902.5,356 L1893.5,365 Z" fill="#afb1b3"/>
<rect x="1929" y="337" width="769.5" height="45" fill="#45494a" stroke="#5e6060" stroke-width="2"/>
<text x="1940.00" y="370" font-family='"Liberation Sans", sans-serif' font-size="27" font-weight="normal" font-style="normal" fill="#bbbbbb" stroke="#bbbbbb" stroke-width="0.35" letter-spacing="0.613" >/book/add</text>
<rect x="2713.5" y="337.7" width="153.0" height="44.10000000000002" rx="5" ry="5" fill="#3c3f41" stroke="#5e6060" stroke-width="2"/>
<text x="2724.50" y="370" font-family='"Liberation Sans", sans-serif' font-size="27" font-weight="normal" font-style="normal" fill="#777777" stroke="#777777" stroke-width="0.35" letter-spacing="0.000" >0</text>
<path d="M2836,355 L2854,355 L2845.0,364 Z" fill="#6a6a6a"/>
<text x="1743.00" y="440" font-family='"Liberation Sans", sans-serif' font-size="24" font-weight="normal" font-style="normal" fill="#bbbbbb" stroke="#bbbbbb" stroke-width="0.35" letter-spacing="0.383" >Headers</text>
<text x="1897.00" y="440" font-family='"Liberation Sans", sans-serif' font-size="24" font-weight="normal" font-style="normal" fill="#bbbbbb" stroke="#bbbbbb" stroke-width="0.35" letter-spacing="-0.172" >Path Param</text>
<text x="2084.60" y="440" font-family='"Liberation Sans", sans-serif' font-size="24" font-weight="normal" font-style="normal" fill="#bbbbbb" stroke="#bbbbbb" stroke-width="0.35" letter-spacing="-0.167" >URL Params</text>
<text x="2281.00" y="440" font-family='"Liberation Sans", sans-serif' font-size="24" font-weight="normal" font-style="normal" fill="#bbbbbb" stroke="#bbbbbb" stroke-width="0.35" letter-spacing="0.600" >Body</text>
<text x="2398.70" y="440" font-family='"Liberation Sans", sans-serif' font-size="24" font-weight="normal" font-style="normal" fill="#bbbbbb" stroke="#bbbbbb" stroke-width="0.35" letter-spacing="0.790" >Script</text>
<text x="2524.80" y="440" font-family='"Liberation Sans", sans-serif' font-size="24" font-weight="normal" font-style="normal" fill="#2fb35f" stroke="#2fb35f" stroke-width="0.35" letter-spacing="0.306" >&gt; Response</text>
<text x="2716.80" y="440" font-family='"Liberation Sans", sans-serif' font-size="24" font-weight="normal" font-style="normal" fill="#d9534f" stroke="#d9534f" stroke-width="0.35" letter-spacing="0.325" >Console</text>
<rect x="1712" y="464" width="1162" height="2.5" fill="#323436" />
<rect x="2250" y="459.6" width="118" height="5.899999999999977" fill="#4a88c7" />
<text x="1743.00" y="505.5" font-family='"Liberation Sans", sans-serif' font-size="24" font-weight="normal" font-style="normal" fill="#bbbbbb" stroke="#bbbbbb" stroke-width="0.35" letter-spacing="-0.333" >JSON</text>
<text x="1866.70" y="505.5" font-family='"Liberation Sans", sans-serif' font-size="24" font-weight="normal" font-style="normal" fill="#bbbbbb" stroke="#bbbbbb" stroke-width="0.35" letter-spacing="0.293" >Form URL-Encoded</text>
<text x="2146.50" y="505.5" font-family='"Liberation Sans", sans-serif' font-size="24" font-weight="normal" font-style="normal" fill="#bbbbbb" stroke="#bbbbbb" stroke-width="0.35" letter-spacing="0.994" >Multipart</text>
<rect x="1712" y="530" width="1162" height="2.5" fill="#323436" />
<rect x="1836" y="525.7" width="280" height="5.899999999999977" fill="#4a88c7" />
<text x="1743.00" y="572" font-family='"Liberation Sans", sans-serif' font-size="24" font-weight="normal" font-style="normal" fill="#bbbbbb" stroke="#bbbbbb" stroke-width="0.35" letter-spacing="0.150" >Table</text>
<text x="1862.90" y="572" font-family='"Liberation Sans", sans-serif' font-size="24" font-weight="normal" font-style="normal" fill="#bbbbbb" stroke="#bbbbbb" stroke-width="0.35" letter-spacing="0.667" >Text</text>
<rect x="1712" y="598" width="1164" height="999.5999999999999" fill="#313335" />
<rect x="1714" y="600" width="1158" height="993.8" fill="#3c3f41" />
<rect x="1712" y="591.7" width="120" height="6.2999999999999545" fill="#4a88c7" />
<rect x="1730.1" y="621.9" width="19.700000000000045" height="4.2000000000000455" fill="#c6c6c6" />
<rect x="1737.9" y="614" width="4.099999999999909" height="19.899999999999977" fill="#c6c6c6" />
<rect x="1781.9" y="622" width="20.199999999999818" height="4" fill="#5f6061" />
<path d="M1830,622 Q1836,612 1845,612 Q1854,612 1858,622 Q1854,631 1845,632 Q1836,632 1830,622 Z" fill="#6c6c6c"/>
<circle cx="1845" cy="622" r="4.6" fill="#3c3f41"/><circle cx="1845" cy="622" r="2.2" fill="#6c6c6c"/>
<rect x="1844.5" y="623" width="16.5" height="18" fill="#3c3f41" />
<rect x="1846" y="624" width="14" height="16" fill="#6c6c6c" />
<rect x="1849" y="629" width="8" height="2" fill="#3c3f41" />
<rect x="1849" y="634" width="8" height="2" fill="#3c3f41" />
<rect x="1895.1" y="609" width="4.4" height="12" rx="2.2" fill="#6c6c6c"/>
<rect x="1889" y="619.9" width="17" height="4.3" rx="1.2" fill="#6c6c6c"/>
<path d="M1889,625.8 L1906.5,625.8 Q1907.6,633 1907.3,636 Q1907,638.8 1905,638.8 L1884,638.8 Q1888,634 1889,625.8 Z" fill="#6c6c6c"/>
<rect x="1891.6000000000001" y="631.4" width="1.6" height="7.5" fill="#3c3f41"/>
<rect x="1896.4" y="631.4" width="1.6" height="7.5" fill="#3c3f41"/>
<rect x="1901.4" y="631.4" width="1.6" height="7.5" fill="#3c3f41"/>
<path d="M1941.7,613 L1941.7,631" stroke="#129be4" stroke-width="2.6"/>
<path d="M1937.7,629.5 L1945.7,629.5 L1941.7,635 Z" fill="#129be4"/>
<text x="1949.20" y="622" font-family='"Liberation Sans", sans-serif' font-size="12.5" font-weight="bold" font-style="normal" fill="#129be4" letter-spacing="0.000" >A</text>
<text x="1949.50" y="635.7" font-family='"Liberation Sans", sans-serif' font-size="12.5" font-weight="bold" font-style="normal" fill="#129be4" letter-spacing="0.000" >Z</text>
<circle cx="1984.5" cy="624.5" r="23" fill="#00a344"/>
<path d="M1984.6,612 L1988.6,612 L1988.6,632.7 L1984.6,632.7 L1984.6,617.8 Q1982,619.6 1978.9,620.2 L1978.9,616.5 Q1983,615 1984.6,612 Z" fill="#ffffff"/>
<rect x="1714" y="647.5" width="1158" height="2.5" fill="#313335" />
<rect x="1774" y="650" width="1098" height="48" fill="#45494a" />
<rect x="1772" y="650" width="2" height="48" fill="#383b3d" />
<rect x="1714" y="698" width="1158" height="2" fill="#323436" />
<rect x="1714" y="738" width="1158" height="2" fill="#505356" />
<rect x="1714" y="778.5" width="1158" height="2.0" fill="#505356" />
<rect x="1714" y="818.3" width="1158" height="2.0" fill="#505356" />
<rect x="1903.5" y="652" width="2.0" height="44" fill="#383b3d" />
<rect x="2173.5" y="652" width="2.0" height="44" fill="#383b3d" />
<rect x="2549.5" y="652" width="2.0" height="44" fill="#383b3d" />
<rect x="1770" y="700" width="2" height="119" fill="#505356" />
<rect x="1903" y="700" width="2" height="119" fill="#505356" />
<rect x="2173" y="700" width="2" height="119" fill="#505356" />
<rect x="2549" y="700" width="2" height="119" fill="#505356" />
<rect x="2870" y="700" width="2" height="119" fill="#505356" />
<rect x="1721" y="661" width="25.6" height="25.6" rx="4.5" fill="#3f4447" stroke="#6a6b6c" stroke-width="2"/>
<polyline points="1726.6,674.2 1730.9,680.2 1740.5,666.4" fill="none" stroke="#b6b7b8" stroke-width="3.4" stroke-linecap="round" stroke-linejoin="round"/>
<text x="1788.60" y="682" font-family='"Liberation Sans", sans-serif' font-size="23" font-weight="normal" font-style="normal" fill="#bbbbbb" stroke="#bbbbbb" stroke-width="0.35" letter-spacing="-0.950" >Type</text>
<text x="1920.00" y="682" font-family='"Liberation Sans", sans-serif' font-size="23" font-weight="normal" font-style="normal" fill="#bbbbbb" stroke="#bbbbbb" stroke-width="0.35" letter-spacing="-1.825" >Key</text>
<text x="2190.70" y="682" font-family='"Liberation Sans", sans-serif' font-size="23" font-weight="normal" font-style="normal" fill="#bbbbbb" stroke="#bbbbbb" stroke-width="0.35" letter-spacing="-0.625" >Value</text>
<text x="2567.00" y="682" font-family='"Liberation Sans", sans-serif' font-size="23" font-weight="normal" font-style="normal" fill="#bbbbbb" stroke="#bbbbbb" stroke-width="0.35" letter-spacing="-0.205" >Description</text>
<rect x="1721" y="705.3" width="25.6" height="25.6" rx="4.5" fill="#3f4447" stroke="#6a6b6c" stroke-width="2"/>
<polyline points="1726.6,718.5 1730.9,724.5 1740.5,710.6999999999999" fill="none" stroke="#b6b7b8" stroke-width="3.4" stroke-linecap="round" stroke-linejoin="round"/>
<rect x="1794" y="706.0" width="24" height="24.0" fill="#a8a8a8" />
<text x="1798.00" y="726.8" font-family='"Liberation Sans", sans-serif' font-size="20" font-weight="normal" font-style="normal" fill="#3c3f41" stroke="#3c3f41" stroke-width="0.35" letter-spacing="0.000" >A</text>
<path d="M1864,715.6999999999999 L1882,715.6999999999999 L1873.0,725.9999999999999 Z" fill="#afb1b3"/>
<text x="1916.70" y="730" font-family='"Liberation Sans", sans-serif' font-size="27" font-weight="normal" font-style="normal" fill="#bbbbbb" stroke="#bbbbbb" stroke-width="0.35" letter-spacing="0.439" >createTime</text>
<text x="2180.20" y="730" font-family='"Liberation Sans", sans-serif' font-size="27" font-weight="normal" font-style="normal" fill="#bbbbbb" stroke="#bbbbbb" stroke-width="0.35" letter-spacing="0.628" >2022-10-10 19:35:43</text>
<rect x="1721" y="745.5" width="25.6" height="25.6" rx="4.5" fill="#3f4447" stroke="#6a6b6c" stroke-width="2"/>
<polyline points="1726.6,758.7 1730.9,764.7 1740.5,750.9" fill="none" stroke="#b6b7b8" stroke-width="3.4" stroke-linecap="round" stroke-linejoin="round"/>
<line x1="1790.9" y1="746.0" x2="1790.9" y2="772.0" stroke="#9a9a9a" stroke-width="2.2" />
<line x1="1821.1" y1="746.0" x2="1821.1" y2="772.0" stroke="#9a9a9a" stroke-width="2.2" />
<text x="0" y="0" transform="translate(1793.2,766.0) scale(0.88,1.45)" font-family='"Liberation Sans", sans-serif' font-size="16" font-weight="bold" fill="#929292" letter-spacing="-0.6">123</text>
<path d="M1864,755.9 L1882,755.9 L1873.0,766.1999999999999 Z" fill="#afb1b3"/>
<text x="1916.70" y="770" font-family='"Liberation Sans", sans-serif' font-size="27" font-weight="normal" font-style="normal" fill="#bbbbbb" stroke="#bbbbbb" stroke-width="0.35" letter-spacing="-0.300" >id</text>
<text x="2180.20" y="770" font-family='"Liberation Sans", sans-serif' font-size="27" font-weight="normal" font-style="normal" fill="#bbbbbb" stroke="#bbbbbb" stroke-width="0.35" letter-spacing="0.000" >1</text>
<text x="2557.40" y="770" font-family='"Liberation Sans", sans-serif' font-size="27" font-weight="normal" font-style="normal" fill="#bbbbbb" stroke="#bbbbbb" stroke-width="0.35" letter-spacing="0.325" >book id</text>
<rect x="1721" y="785.5" width="25.6" height="25.6" rx="4.5" fill="#3f4447" stroke="#6a6b6c" stroke-width="2"/>
<polyline points="1726.6,798.7 1730.9,804.7 1740.5,790.9" fill="none" stroke="#b6b7b8" stroke-width="3.4" stroke-linecap="round" stroke-linejoin="round"/>
<rect x="1794" y="786.2" width="24" height="24.0" fill="#a8a8a8" />
<text x="1798.00" y="807.0" font-family='"Liberation Sans", sans-serif' font-size="20" font-weight="normal" font-style="normal" fill="#3c3f41" stroke="#3c3f41" stroke-width="0.35" letter-spacing="0.000" >A</text>
<path d="M1864,795.9 L1882,795.9 L1873.0,806.1999999999999 Z" fill="#afb1b3"/>
<text x="1916.70" y="810" font-family='"Liberation Sans", sans-serif' font-size="27" font-weight="normal" font-style="normal" fill="#bbbbbb" stroke="#bbbbbb" stroke-width="0.35" letter-spacing="-0.450" >name</text>
<text x="2180.20" y="810" font-family='"Liberation Sans", sans-serif' font-size="27" font-weight="normal" font-style="normal" fill="#bbbbbb" stroke="#bbbbbb" stroke-width="0.35" letter-spacing="0.150" >name_1n60b</text>
<text x="2557.40" y="810" font-family='"Liberation Sans", sans-serif' font-size="27" font-weight="normal" font-style="normal" fill="#bbbbbb" stroke="#bbbbbb" stroke-width="0.35" letter-spacing="0.125" >book name</text>
<rect x="2874" y="149" width="2" height="449" fill="#313335" />
<rect x="2876" y="149" width="40" height="1447" fill="#3c3f41" />
<rect x="2876" y="287.8" width="40" height="211.2" fill="#2c2f30" />
<text x="2880.5" y="189" font-family='"Liberation Sans", sans-serif' font-size="33" font-weight="bold" font-style="italic" fill="#b8b8b8" letter-spacing="0">m</text>
<text x="0" y="0" transform="translate(2887.24,203.50) rotate(90)" font-family='"Liberation Sans", sans-serif' font-size="24" fill="#bbbbbb" stroke="#bbbbbb" stroke-width="0.3" letter-spacing="-2.137">Maven</text>
<circle cx="2894.2" cy="322.5" r="6.4" fill="none" stroke="#f07ca2" stroke-width="5.2"/>
<rect x="2885.2" y="322" width="5" height="14" fill="#f07ca2"/>
<path d="M2893,328.5 L2898.5,326.5 L2905,336 L2899,336 Z" fill="#f07ca2"/>
<text x="0" y="0" transform="translate(2887.24,346.00) rotate(90)" font-family='"Liberation Sans", sans-serif' font-size="24" fill="#e8e8e8" stroke="#e8e8e8" stroke-width="0.3" letter-spacing="-1.068">Fast Request</text>
<rect x="36" y="1595.7" width="1674" height="1.8999999999998636" fill="#313335" />
<rect x="36" y="1598" width="2880" height="40" fill="#3c3f41" />
<circle cx="101.5" cy="1609.5" r="3.4" fill="#b0b0b0"/><circle cx="101.5" cy="1627" r="3.4" fill="#b0b0b0"/><circle cx="112" cy="1613" r="3.4" fill="#b0b0b0"/>
<path d="M101.5,1609.5 L101.5,1627 M101.5,1623 Q112,1621 112,1613" fill="none" stroke="#b0b0b0" stroke-width="3"/>
<text x="128.60" y="1626.5" font-family='"Liberation Sans", sans-serif' font-size="24" font-weight="normal" font-style="normal" fill="#bbbbbb" stroke="#bbbbbb" stroke-width="0.35" letter-spacing="-1.525" >Git</text>
<rect x="200" y="1609.8" width="4.5" height="4.5" fill="#b0b0b0" />
<rect x="207" y="1609.8" width="13" height="4.5" fill="#b0b0b0" />
<rect x="200" y="1615.8" width="4.5" height="4.5" fill="#b0b0b0" />
<rect x="207" y="1615.8" width="13" height="4.5" fill="#b0b0b0" />
<rect x="200" y="1621.8" width="4.5" height="4.5" fill="#b0b0b0" />
<rect x="207" y="1621.8" width="13" height="4.5" fill="#b0b0b0" />
<text x="230.80" y="1626.5" font-family='"Liberation Sans", sans-serif' font-size="24" font-weight="normal" font-style="normal" fill="#bbbbbb" stroke="#bbbbbb" stroke-width="0.35" letter-spacing="-2.967" >TODO</text>
<circle cx="345" cy="1618" r="11.2" fill="#b0b0b0"/>
<rect x="343.3" y="1610" width="3.3999999999999773" height="10" fill="#3c3f41" />
<rect x="343.3" y="1622.5" width="3.3999999999999773" height="3.0" fill="#3c3f41" />
<text x="366.60" y="1626.5" font-family='"Liberation Sans", sans-serif' font-size="24" font-weight="normal" font-style="normal" fill="#bbbbbb" stroke="#bbbbbb" stroke-width="0.35" letter-spacing="-0.964" >Problems</text>
<rect x="506" y="1608.3" width="22" height="19.700000000000045" fill="#b0b0b0" />
<polyline points="510,1612.5 516.5,1617 510,1621.5" fill="none" stroke="#3c3f41" stroke-width="2.2"/>
<rect x="517" y="1623" width="7.5" height="2" fill="#3c3f41" />
<text x="539.00" y="1626.5" font-family='"Liberation Sans", sans-serif' font-size="24" font-weight="normal" font-style="normal" fill="#bbbbbb" stroke="#bbbbbb" stroke-width="0.35" letter-spacing="-1.100" >Terminal</text>
<path d="M664,1612 L676,1606 L680,1610 L676,1613 L689,1628 L686,1631 L672,1616 L668,1619 Z" fill="#b0b0b0"/>
<text x="698.00" y="1626.5" font-family='"Liberation Sans", sans-serif' font-size="24" font-weight="normal" font-style="normal" fill="#bbbbbb" stroke="#bbbbbb" stroke-width="0.35" letter-spacing="-1.088" >Build</text>
<path d="M791,1613 L802,1607 L813,1613 L802,1619 Z" fill="#b0b0b0"/>
<path d="M791,1619 L802,1625 L813,1619 M791,1625 L802,1631 L813,1625" fill="none" stroke="#b0b0b0" stroke-width="2.4"/>
<text x="824.80" y="1626.5" font-family='"Liberation Sans", sans-serif' font-size="24" font-weight="normal" font-style="normal" fill="#bbbbbb" stroke="#bbbbbb" stroke-width="0.35" letter-spacing="-0.859" >Dependencies</text>
<path d="M2744,1631.5 L2732,1631.5 Q2720.5,1631 2720.5,1619 Q2721,1607 2732.5,1607 Q2744,1607.5 2744,1619 Z" fill="none" stroke="#b0b0b0" stroke-width="2.6"/>
<text x="2755.40" y="1625.8" font-family='"Liberation Sans", sans-serif' font-size="24" font-weight="normal" font-style="normal" fill="#bbbbbb" stroke="#bbbbbb" stroke-width="0.35" letter-spacing="-1.312" >Event Log</text>
<rect x="36" y="1638" width="2880" height="2" fill="#323436" />
<rect x="36" y="1640" width="2880" height="40" fill="#3c3f41" />
<path d="M49,1650 L49,1672 L71,1672" fill="none" stroke="#b0b0b0" stroke-width="2"/>
<rect x="52.5" y="1648" width="18.5" height="18.5" fill="none" stroke="#b0b0b0" stroke-width="2"/>
<text x="2443.00" y="1667.8" font-family='"Liberation Sans", sans-serif' font-size="24" font-weight="normal" font-style="normal" fill="#bbbbbb" stroke="#bbbbbb" stroke-width="0.35" letter-spacing="-1.400" >9:14</text>
<text x="2510.80" y="1667.8" font-family='"Liberation Sans", sans-serif' font-size="24" font-weight="normal" font-style="normal" fill="#bbbbbb" stroke="#bbbbbb" stroke-width="0.35" letter-spacing="-4.500" >LF</text>
<text x="2558.80" y="1667.8" font-family='"Liberation Sans", sans-serif' font-size="24" font-weight="normal" font-style="normal" fill="#bbbbbb" stroke="#bbbbbb" stroke-width="0.35" letter-spacing="-1.125" >UTF-8</text>
<text x="2648.80" y="1667.8" font-family='"Liberation Sans", sans-serif' font-size="24" font-weight="normal" font-style="normal" fill="#bbbbbb" stroke="#bbbbbb" stroke-width="0.35" letter-spacing="-0.721" >4 spaces</text>
<circle cx="2772" cy="1650.5" r="3.4" fill="#b0b0b0"/><circle cx="2772" cy="1672.5" r="3.4" fill="#b0b0b0"/><circle cx="2784" cy="1652.5" r="3.4" fill="#b0b0b0"/>
<path d="M2772,1650.5 L2772,1672.5 M2772,1668 Q2784,1664 2784,1652.5" fill="none" stroke="#b0b0b0" stroke-width="3"/>
<text x="2798.50" y="1667.8" font-family='"Liberation Sans", sans-serif' font-size="24" font-weight="normal" font-style="normal" fill="#bbbbbb" stroke="#bbbbbb" stroke-width="0.35" letter-spacing="-1.667" >main</text>
<rect x="2872" y="1657.7" width="16" height="11.799999999999955" fill="#b0b0b0" />
<path d="M2867.2,1660 L2867.2,1655 Q2867.2,1649.5 2872.2,1649.5 Q2877.2,1649.5 2877.2,1655 L2877.2,1658" fill="none" stroke="#b0b0b0" stroke-width="2.6"/>
<path d="M1634,109 Q1637,107.5 1640,109 Q1642,112 1640.5,116 Q1639.5,118 1639,119 Q1644,120.5 1646,122.5 Q1646.3,124 1646,125 L1641,125 Z" fill="#b4b4b4"/>
<path d="M1630,107.5 Q1635.5,107.5 1635.8,113.5 Q1635.5,118 1633.5,121.5 Q1640,123 1642.5,126 Q1643.5,128.5 1643.5,131 L1617.5,131 Q1617.5,127 1619.5,125.5 Q1622,123 1626.5,121.5 Q1624.5,118 1624.2,113.5 Q1624.5,107.5 1630,107.5 Z" fill="#b4b4b4" stroke="#3c3f41" stroke-width="1.4"/>
<path d="M1652,118 L1668,118 L1660.0,126 Z" fill="#afb1b3"/>
<line x1="1685" y1="99.4" x2="1685" y2="139.7" stroke="#555759" stroke-width="1.6" />
<path d="M1702,115 L1714,106 L1719,110 L1715,114 L1732,131 L1728.5,134 L1711,117 L1707,120 Z" fill="#4a9e52"/>
<rect x="1757.4" y="99" width="433" height="41" rx="8" fill="none" stroke="#5e6060" stroke-width="2"/>
<path d="M1780,106.1 L1803.9,106.1 L1803.9,125.8 L1801.9,125.8 L1801.9,109.7 L1780,109.7 Z" fill="#54575a"/>
<rect x="1776.1" y="112.2" width="23.90000000000009" height="19.499999999999986" fill="#54575a" />
<rect x="1778.1" y="116.5" width="19.90000000000009" height="13.199999999999989" fill="#36393b" />
<rect x="1780" y="117.8" width="16.09999999999991" height="10.0" fill="#3b5d75" />
<text x="1814.00" y="128.6" font-family='"Liberation Sans", sans-serif' font-size="24" font-weight="normal" font-style="normal" fill="#bbbbbb" stroke="#bbbbbb" stroke-width="0.35" letter-spacing="-0.780" >FastRequestSamplesApplication</text>
<path d="M2154,116.5 L2172.5,116.5 L2163.25,126.0 Z" fill="#afb1b3"/>
<path d="M2220,108 L2239.5,119.5 L2220,131.4 Z" fill="#4aa356"/>
<path d="M2273.5,106.9 L2280,112 L2286.5,106.9" fill="none" stroke="#46a352" stroke-width="3"/>
<path d="M2271.5,118 Q2271.5,111.3 2280.45,111.3 Q2289.4,111.3 2289.4,118 L2289.4,127 Q2289.4,133.9 2280.45,133.9 Q2271.5,133.9 2271.5,127 Z" fill="#46a352"/>
<rect x="2268" y="114.8" width="24.09999999999991" height="2.799999999999997" fill="#46a352" />
<rect x="2268" y="121.2" width="24.09999999999991" height="2.799999999999997" fill="#46a352" />
<rect x="2268" y="127.9" width="24.09999999999991" height="2.8000000000000114" fill="#46a352" />
<rect x="2276.3" y="118" width="7.899999999999636" height="2.799999999999997" fill="#3c3f41" />
<rect x="2276.3" y="124.2" width="7.899999999999636" height="2.5999999999999943" fill="#3c3f41" />
<path transform="translate(2318,107.7)" d="M0,2.1 L10.2,0 L20.2,2.1 L20.2,8.1 L16.2,8.1 L16.2,5.6 L10.2,4.3 L10.2,20 L14.2,17.1 L14.2,22.6 L10.2,24.1 Q0.2,19.1 0,11.1 Z" fill="#b8b9bb"/>
<path transform="translate(2318,107.7)" d="M16,10.2 L29.9,19.2 L16,28.4 Z" fill="#46a352"/>
<rect x="2374" y="110" width="20" height="20" fill="#5e5e5e" />
<line x1="2417" y1="101" x2="2417" y2="139.7" stroke="#555759" stroke-width="1.6" />
<text x="2436.60" y="128" font-family='"Liberation Sans", sans-serif' font-size="24" font-weight="normal" font-style="normal" fill="#bbbbbb" stroke="#bbbbbb" stroke-width="0.35" letter-spacing="-0.617" >Git:</text>
<path d="M2519,108.5 L2501,126.5" stroke="#3592c4" stroke-width="3.4"/><path d="M2497,113.5 L2497,130 L2513.5,130 Z" fill="#3592c4"/>
<polyline points="2548.5,119 2556,127.5 2573.5,109" fill="none" stroke="#4aa356" stroke-width="3.6"/>
<path d="M2601,129.5 L2618,112.5" stroke="#4aa356" stroke-width="3.4"/><path d="M2622,108 L2622,124.5 L2605.5,108 Z" fill="#4aa356"/>
<circle cx="2663.6" cy="120" r="12.3" fill="none" stroke="#b4b4b4" stroke-width="3"/>
<polyline points="2663.6,111.5 2663.6,120.5 2669,125" fill="none" stroke="#b4b4b4" stroke-width="2.6"/>
<path d="M2710,113.8 L2719.5,113.8 A8.2,8.2 0 0 1 2719.5,130.2 L2711.8,130.2" fill="none" stroke="#b4b5b7" stroke-width="3.8"/>
<path d="M2704.3,113.8 L2711.8,106.3 L2711.8,121.3 Z" fill="#b4b5b7"/>
<line x1="2749" y1="101" x2="2749" y2="139.7" stroke="#555759" stroke-width="1.6" />
<circle cx="2779" cy="117.5" r="8.8" fill="none" stroke="#b4b4b4" stroke-width="3.2"/>
<line x1="2785.5" y1="124" x2="2795" y2="133.5" stroke="#b4b4b4" stroke-width="3.4"/>
<polygon points="2829.05,110.84 2831.55,109.88 2831.44,107.26 2836.56,107.26 2836.45,109.88 2838.95,110.84 2839.37,111.09 2841.45,112.76 2843.67,111.36 2846.23,115.80 2843.91,117.01 2844.32,119.66 2844.32,120.14 2843.91,122.79 2846.23,124.00 2843.67,128.44 2841.45,127.04 2839.37,128.71 2838.95,128.96 2836.45,129.92 2836.56,132.54 2831.44,132.54 2831.55,129.92 2829.05,128.96 2828.63,128.71 2826.55,127.04 2824.33,128.44 2821.77,124.00 2824.09,122.79 2823.68,120.14 2823.68,119.66 2824.09,117.01 2821.77,115.80 2824.33,111.36 2826.55,112.76 2828.63,111.09" fill="#b4b5b7"/>
<circle cx="2834" cy="119.9" r="4.77" fill="#3c3f41"/>
<defs><linearGradient id="lg" x1="0" y1="0" x2="1" y2="1"><stop offset="0" stop-color="#f4e03a"/><stop offset="0.45" stop-color="#21d789"/><stop offset="1" stop-color="#087cfa"/></linearGradient></defs>
<defs><linearGradient id="lg2" x1="0" y1="0" x2="0" y2="1"><stop offset="0" stop-color="#f4ee3c"/><stop offset="0.55" stop-color="#7fd98a"/><stop offset="1" stop-color="#1fbfd6"/></linearGradient></defs>
<defs><linearGradient id="lg3" x1="0" y1="0" x2="1" y2="0"><stop offset="0" stop-color="#12d47c"/><stop offset="1" stop-color="#0a98e6"/></linearGradient></defs>
<path d="M2874.4,105.9 Q2882,110 2888.9,117.7 Q2884,126 2877.6,133.9 Q2870.5,120 2874.4,105.9 Z" fill="url(#lg2)"/>
<path d="M2874.4,105.9 Q2890,107 2900,117.7 L2888.9,117.7 Q2882,110 2874.4,105.9 Z" fill="url(#lg3)"/>
<path d="M2888.9,117.7 L2900,117.7 Q2891,130 2877.6,133.9 Q2884,126 2888.9,117.7 Z" fill="#0b68cc"/>
</g>
<defs><linearGradient id="hl" x1="0" y1="36" x2="0" y2="62" gradientUnits="userSpaceOnUse"><stop offset="0" stop-color="#6a6c6e" stop-opacity="1"/><stop offset="1" stop-color="#6a6c6e" stop-opacity="0"/></linearGradient></defs>
<path d="M36.8,62 L36.8,56 A19.2,19.2 0 0 1 56,36.8 L2896,36.8 A19.2,19.2 0 0 1 2915.2,56 L2915.2,62" fill="none" stroke="url(#hl)" stroke-width="1.6"/>
</svg></div></body></html>
